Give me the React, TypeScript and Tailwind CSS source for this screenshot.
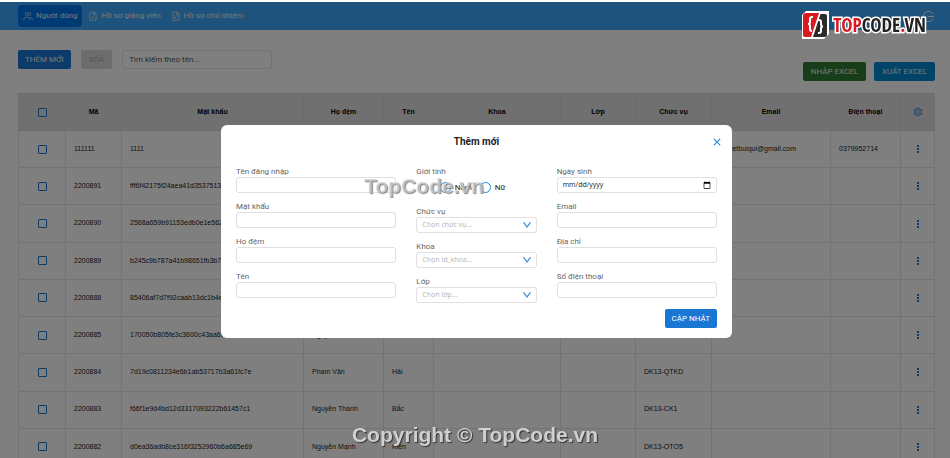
import { useState } from "react";
import {
  AiOutlineClose,
  AiOutlineDown,
  AiOutlineFilePdf,
  AiOutlineFileText,
  AiOutlineLogout,
  AiOutlineSetting,
} from "react-icons/ai";
import { Users } from "lucide-react";

interface User {
  code: string;
  password: string;
  lastName?: string;
  firstName?: string;
  role?: string;
  email?: string;
  phone?: string;
}

const users: User[] = [
  { code: "111111", password: "1111", email: "akvietbuiqui@gmail.com", phone: "0379952714" },
  { code: "2200891", password: "fff6f42175f24aea41d3537513" },
  { code: "2200890", password: "2568a659b91153edb0e1e562" },
  { code: "2200889", password: "b245c9b787a41b98651fb3b7" },
  { code: "2200888", password: "85406af7d7f92caab13dc1b4e" },
  { code: "2200885", password: "170050b805fe3c3600c43aa65d4b6167", lastName: "Nguyễn Tiến", firstName: "Đạt", role: "DK13-OTO2" },
  { code: "2200884", password: "7d19c0811234e6b1ab53717b3a61fc7e", lastName: "Phạm Văn", firstName: "Hải", role: "DK13-QTKD" },
  { code: "2200883", password: "f66f1e9d4bd12d3317093222b61457c1", lastName: "Nguyễn Thành", firstName: "Bắc", role: "DK13-CK1" },
  { code: "2200882", password: "d0ea36adb8ce316f3252960b6a685e69", lastName: "Nguyễn Mạnh", firstName: "Kiên", role: "DK13-OTO5" },
];

const headers = ["Mã", "Mật khẩu", "Họ đệm", "Tên", "Khoa", "Lớp", "Chức vụ", "Email", "Điện thoại"];

const checkboxClass =
  "block mx-auto size-[9px] appearance-none rounded-[1px] border border-[#1976d2] checked:bg-[#1976d2]";
const fieldClass =
  "block w-full h-4 rounded-[3px] border border-[#e0e0e0] bg-white px-[5px] text-[7px] text-gray-900 focus:outline-none";

function Navbar() {
  return (
    <header className="flex items-center justify-between h-7 mt-0.5 pl-[18px] pr-[15px] bg-[#3aa6f8] text-[#f0f0f0]">
      <nav className="flex items-center gap-1.5 text-[8px]">
        <a href="#users" className="flex items-center gap-[3px] h-[22px] px-[5px] rounded bg-[#0074e8]">
          <Users className="size-[10px]" strokeWidth={1.5} />
          Người dùng
        </a>
        <a href="#teachers" className="flex items-center gap-[3px]">
          <AiOutlineFilePdf className="size-[10px]" />
          Hồ sơ giảng viên
        </a>
        <a href="#homeroom" className="flex items-center gap-[3px] ml-1">
          <AiOutlineFileText className="size-[10px]" />
          Hồ sơ chủ nhiệm
        </a>
      </nav>
      <button type="button" aria-label="Đăng xuất">
        <AiOutlineLogout className="size-[13px]" />
      </button>
    </header>
  );
}

function Toolbar() {
  const [keyword, setKeyword] = useState("");

  return (
    <div className="flex justify-between h-[31px] mt-5 mb-3 text-[8px]">
      <div className="flex items-start gap-[10px]">
        <button type="button" className="h-[19px] px-[7px] rounded-xs bg-[#1976d2] text-[#eee]">
          THÊM MỚI
        </button>
        <button type="button" disabled className="h-[19px] px-2 rounded-xs bg-[#dadada] text-[#a6a6a6]">
          XÓA
        </button>
        <input
          type="text"
          aria-label="Tìm kiếm"
          placeholder="Tìm kiếm theo tên..."
          value={keyword}
          onChange={(e) => setKeyword(e.target.value)}
          className="w-[150px] h-[19px] px-1.5 rounded-[3px] border border-[#e6e6e6] placeholder:text-[#555]"
        />
      </div>
      <div className="flex items-end gap-2">
        <button type="button" className="h-[19px] px-2 rounded-xs bg-[#2e7d32] text-[#eee]">
          NHẬP EXCEL
        </button>
        <button type="button" className="h-[19px] px-2 rounded-xs bg-[#0288d1] text-[#eee]">
          XUẤT EXCEL
        </button>
      </div>
    </div>
  );
}

function MoreIcon() {
  return (
    <svg viewBox="0 0 8 8" className="size-2" fill="currentColor">
      <rect x="3" y="0" width="2" height="2" />
      <rect x="3" y="3" width="2" height="2" />
      <rect x="3" y="6" width="2" height="2" />
    </svg>
  );
}

function UserTable() {
  return (
    <table className="table-fixed w-full h-[373px] border-collapse font-['Liberation_Sans',sans-serif] text-[7px] text-[#222]">
      <colgroup>
        <col className="w-[47px]" />
        <col className="w-14" />
        <col className="w-[182px]" />
        <col className="w-20" />
        <col className="w-[50px]" />
        <col />
        <col className="w-[75px]" />
        <col className="w-[76px]" />
        <col className="w-[119px]" />
        <col className="w-[70px]" />
        <col className="w-[34px]" />
      </colgroup>
      <thead className="bg-[#e0e0e0] text-black">
        <tr className="h-[37px]">
          <th className="border border-[#d8d8d8]">
            <input type="checkbox" aria-label="Chọn tất cả" className={checkboxClass} />
          </th>
          {headers.map((header) => (
            <th key={header} className="border border-[#d8d8d8] font-bold">
              {header}
            </th>
          ))}
          <th className="border border-[#d8d8d8]">
            <AiOutlineSetting className="mx-auto size-[10px] text-[#1976d2]" />
          </th>
        </tr>
      </thead>
      <tbody>
        {users.map((user) => (
          <tr key={user.code} className="[&>td]:border [&>td]:border-[#e4e4e4] [&>td]:px-2">
            <td>
              <input type="checkbox" aria-label={`Chọn ${user.code}`} className={checkboxClass} />
            </td>
            <td>{user.code}</td>
            <td>{user.password}</td>
            <td>{user.lastName}</td>
            <td>{user.firstName}</td>
            <td></td>
            <td></td>
            <td>{user.role}</td>
            <td>{user.email}</td>
            <td>{user.phone}</td>
            <td>
              <button type="button" aria-label="Tùy chọn" className="block mx-auto text-[#1976d2]">
                <MoreIcon />
              </button>
            </td>
          </tr>
        ))}
      </tbody>
    </table>
  );
}

function TextField({ id, label, type = "text" }: { id: string; label: string; type?: string }) {
  return (
    <div>
      <label htmlFor={id} className="block">
        {label}
      </label>
      <input id={id} type={type} className={fieldClass} />
    </div>
  );
}

function DateField({ id, label }: { id: string; label: string }) {
  return (
    <div>
      <label htmlFor={id} className="block">
        {label}
      </label>
      <input
        id={id}
        type="date"
        className={`${fieldClass} font-['Open_Sans',sans-serif] [&::-webkit-datetime-edit-month-field]:p-0 [&::-webkit-datetime-edit-day-field]:p-0 [&::-webkit-datetime-edit-year-field]:p-0 [&::-webkit-calendar-picker-indicator]:size-2 [&::-webkit-calendar-picker-indicator]:p-0`}
      />
    </div>
  );
}

function SelectField({ id, label, placeholder }: { id: string; label: string; placeholder: string }) {
  return (
    <div>
      <label htmlFor={id} className="block">
        {label}
      </label>
      <div className="relative">
        <select
          id={id}
          className="block w-full h-4 appearance-none rounded-[3px] border border-[#e0e0e0] bg-white px-[5px] font-['Open_Sans',sans-serif] text-[7px] text-[#b4b4b4] focus:outline-none"
        >
          <option>{placeholder}</option>
        </select>
        <AiOutlineDown
          strokeWidth={40}
          className="absolute right-[5px] top-[3px] size-[10px] text-[#1976d2] pointer-events-none"
        />
      </div>
    </div>
  );
}

function GenderField() {
  return (
    <fieldset>
      <legend className="block">Giới tính</legend>
      <div className="flex items-center justify-center gap-2 h-[21px] pr-2 text-[#222]">
        {["Nam", "Nữ"].map((gender) => (
          <label key={gender} className="flex items-center gap-1">
            <input
              type="radio"
              name="gender"
              value={gender}
              className="size-[11px] appearance-none rounded-full border border-[#1e88e5] checked:border-4"
            />
            {gender}
          </label>
        ))}
      </div>
    </fieldset>
  );
}

function CreateUserModal() {
  return (
    <div className="fixed inset-x-0 top-0.5 bottom-0 flex items-center justify-center pt-0.5 pl-[3px] bg-black/50">
      <form
        role="dialog"
        aria-labelledby="modal-title"
        onSubmit={(e) => e.preventDefault()}
        className="w-[511px] px-[10px] pt-[9px] pb-[10px] rounded-md bg-white text-[8px] leading-[11px] text-[#666]"
      >
        <div className="grid grid-cols-3 items-center mb-4">
          <h2 id="modal-title" className="col-start-2 text-center text-[10px] leading-4 font-bold text-[#222]">
            Thêm mới
          </h2>
          <button type="button" aria-label="Đóng" className="justify-self-end text-[#1976d2]">
            <AiOutlineClose strokeWidth={20} className="size-[10px]" />
          </button>
        </div>
        <div className="grid grid-cols-[4fr_3fr_4fr] gap-5 px-[5px]">
          <div className="flex flex-col gap-2">
            <TextField id="username" label="Tên đăng nhập" />
            <TextField id="password" label="Mật khẩu" type="password" />
            <TextField id="last-name" label="Họ đệm" />
            <TextField id="first-name" label="Tên" />
          </div>
          <div className="flex flex-col gap-2">
            <GenderField />
            <SelectField id="role" label="Chức vụ" placeholder="Chọn chức vụ..." />
            <SelectField id="department" label="Khoa" placeholder="Chọn id_khoa..." />
            <SelectField id="class" label="Lớp" placeholder="Chọn lớp..." />
          </div>
          <div className="flex flex-col gap-2">
            <DateField id="birthday" label="Ngày sinh" />
            <TextField id="email" label="Email" type="email" />
            <TextField id="address" label="Địa chỉ" />
            <TextField id="phone" label="Số điện thoại" type="tel" />
          </div>
        </div>
        <div className="flex justify-end mt-1.5 px-[5px]">
          <button type="submit" className="h-[19px] px-[7px] rounded-xs bg-[#1976d2] text-white">
            CẬP NHẬT
          </button>
        </div>
      </form>
    </div>
  );
}

function Logo() {
  return (
    <div className="absolute top-[11px] right-6 flex items-center gap-1">
      <svg viewBox="0 0 28 28" className="size-7">
        <path d="M5 0H28V23L23 28H1V4Z" fill="#fff" />
        <path d="M5 2H18L10 26H4Q2 26 2 24V5Q2 2 5 2Z" fill="#d71920" />
        <path d="M19.500 3H24Q26 3 26 5V24Q26 26 24 26H12Z" fill="#2b2b2b" />
        <path d="M12 6H11Q9 6 9 8V11Q9 13 7 13Q9 13 9 15V18Q9 20 11 20" fill="none" stroke="#fff" strokeWidth="2" />
        <path d="M17 9H18Q20 9 20 11V13.500Q20 15.500 22 15.500Q20 15.500 20 17.500V20Q20 22 18 22H17" fill="none" stroke="#fff" strokeWidth="2" />
      </svg>
      <span className="font-['Open_Sans_Condensed','Noto_Sans_Condensed','Roboto_Condensed',sans-serif] text-[19px] leading-6 font-bold text-[#222] [paint-order:stroke_fill] [-webkit-text-stroke:3px_white]">
        <span className="text-[#d71920]">TOP</span>CODE<span className="text-[#d71920]">.</span>VN
      </span>
    </div>
  );
}

export default function App() {
  return (
    <div className="relative h-screen overflow-hidden bg-white font-['Roboto',sans-serif]">
      <Navbar />
      <main className="pl-[18px] pr-[15px]">
        <Toolbar />
        <UserTable />
      </main>
      <CreateUserModal />
      <Logo />
      <p className="absolute top-[174px] left-[364px] font-['Liberation_Sans',sans-serif] text-[21px] leading-6 font-bold text-[#d0d0d0]/70 [text-shadow:1px_1px_1px_#888] pointer-events-none">
        TopCode.vn
      </p>
      <p className="absolute inset-x-0 bottom-[11px] text-center font-['Liberation_Sans',sans-serif] text-[21px] leading-6 font-bold text-[#d0d0d0] [text-shadow:1px_1px_1px_#333] pointer-events-none">
        Copyright © TopCode.vn
      </p>
    </div>
  );
}
